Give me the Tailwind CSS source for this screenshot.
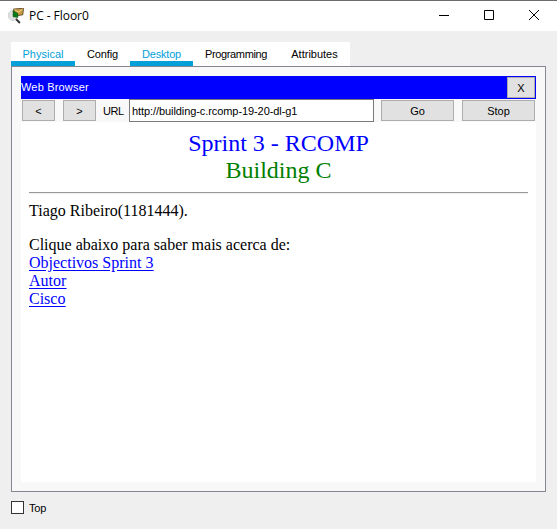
<!DOCTYPE html>
<html lang="pt">
<head>
<meta charset="utf-8">
<title>PC - Floor0</title>
<script src="https://cdn.jsdelivr.net/npm/@tailwindcss/browser@4"></script>
</head>
<body class="w-[557px] h-[529px] overflow-hidden bg-[#efefef] text-black text-[11px] leading-[13px] font-['Liberation_Sans',Arial,sans-serif]">
<div class="flex h-[529px] flex-col">
  <header class="flex h-[31px] shrink-0 items-center border-t border-[#6b6b6b] bg-white pl-2">
    <svg class="size-4 shrink-0" viewBox="0 0 16 16">
      <ellipse cx="5" cy="7.5" rx="4.7" ry="5" fill="#dfe2e1" stroke="#c2c6c5" stroke-width=".7"/>
      <path d="M5.5 1 15.5.3 14.8 6.8 7 8Z" fill="#c99b45" stroke="#4d3817" stroke-width=".8"/>
      <path d="m6.5 1.5 4.2 2.7 4-3.3" fill="none" stroke="#f0cf80" stroke-width="1"/>
      <path d="M5 2.8 9.9 5.5V9.5L5 8.8Z" fill="#087d16" stroke="#124d18" stroke-width=".5"/>
      <path d="m8 11 3.9 4" stroke="#333" stroke-width="1.9"/>
    </svg>
    <h1 class="ml-[5px] font-['Open_Sans','Noto_Sans',sans-serif] text-[12px] leading-4 tracking-[-0.05px] whitespace-nowrap">PC - Floor0</h1>
    <div class="mb-[2px] ml-auto flex items-center gap-[35px] pr-[18px]">
      <svg class="h-[10px] w-[10px]" viewBox="0 0 10 10"><path d="M0 5.5h10" stroke="#000"/></svg>
      <svg class="h-[10px] w-[10px]" viewBox="0 0 10 10"><path d="M.5.5h9v9h-9z" fill="none" stroke="#000"/></svg>
      <svg class="h-[10px] w-[10px]" viewBox="0 0 10 10"><path d="m0 0 10 10M10 0 0 10" stroke="#000"/></svg>
    </div>
  </header>
  <nav class="mt-[11px] ml-[11px] flex h-6 w-[339px] shrink-0 bg-white text-center whitespace-nowrap">
    <span class="w-16 border-b-[5px] border-[#039fd9] pt-[6px] text-[#039fd9]">Physical</span>
    <span class="w-[55px] pt-[6px] tracking-[-0.1px]">Config</span>
    <span class="w-[63px] border-b-[5px] border-[#039fd9] pt-[6px] tracking-[-0.2px] text-[#039fd9]">Desktop</span>
    <span class="w-[86px] pt-[6px] tracking-[-0.35px]">Programming</span>
    <span class="w-[71px] pt-[6px]">Attributes</span>
  </nav>
  <main class="ml-[11px] flex h-[426px] w-[535px] shrink-0 flex-col border border-[#828790] bg-[#f8f8f8] p-[9px]">
    <div class="flex h-[23px] shrink-0 justify-between bg-[#0000ff] text-white">
      <span class="pt-[5px] tracking-[0.18px]">Web Browser</span>
      <button class="mt-px mr-px h-[21px] w-7 border border-[#adadad] bg-[#e1e1e1] pt-px text-black">X</button>
    </div>
    <div class="flex h-[23px] shrink-0 items-center pl-px whitespace-nowrap">
      <button class="h-[21px] w-[33px] border border-[#adadad] bg-[#e1e1e1] pt-px">&lt;</button>
      <button class="ml-2 h-[21px] w-[33px] border border-[#adadad] bg-[#e1e1e1] pt-px">&gt;</button>
      <span class="ml-[7px] w-[26px] pt-px tracking-[-0.5px]">URL</span>
      <div class="h-[23px] w-[245px] border border-[#7a7a7a] bg-white pt-[5px] pl-[2px] tracking-[-0.08px]">http://building-c.rcomp-19-20-dl-g1</div>
      <button class="ml-[7px] h-[21px] w-[73px] border border-[#adadad] bg-[#e1e1e1] pt-px">Go</button>
      <button class="ml-2 h-[21px] w-[73px] border border-[#adadad] bg-[#e1e1e1] pt-px">Stop</button>
    </div>
    <article class="grow bg-white px-2 pt-2 font-['Liberation_Serif','Times_New_Roman',serif] text-[16px] leading-[18px]">
      <div class="text-center text-[24px] leading-[27px]">
        <p class="text-[#0000ff]">Sprint 3 - RCOMP</p>
        <p class="text-[#008000]">Building C</p>
      </div>
      <hr class="mt-2 h-[2px] border-t border-b border-t-[#999] border-b-[#eee]">
      <p class="mt-2">Tiago Ribeiro(1181444).</p>
      <p class="mt-4">Clique abaixo para saber mais acerca de:</p>
      <div class="flex flex-col items-start text-[#0000ff] underline underline-offset-2">
        <a href="#">Objectivos Sprint 3</a>
        <a href="#">Autor</a>
        <a href="#">Cisco</a>
      </div>
    </article>
  </main>
  <label class="mt-[9px] ml-[11px] flex items-start gap-[5px]">
    <input type="checkbox" class="size-[13px] appearance-none border border-[#333] bg-white">
    <span class="pt-px tracking-[-0.2px]">Top</span>
  </label>
</div>
</body>
</html>
